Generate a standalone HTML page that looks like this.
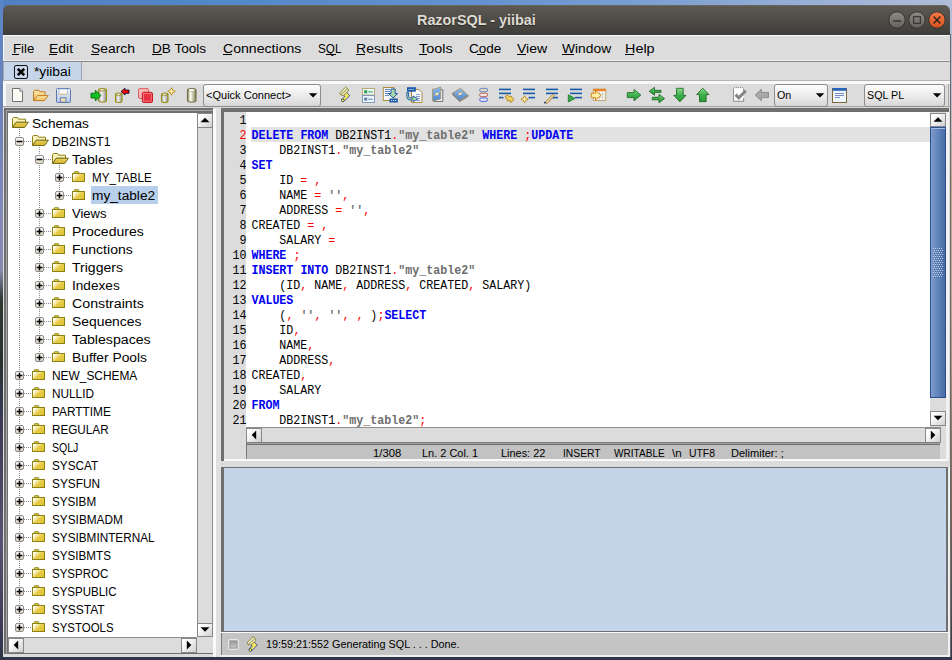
<!DOCTYPE html>
<html><head><meta charset="utf-8"><style>
html,body{margin:0;padding:0;width:952px;height:660px;overflow:hidden;background:#2c3648}
body{position:relative;font-family:"Liberation Sans", sans-serif}
.t{position:absolute;white-space:pre;line-height:1;transform-origin:0 0}
.m{position:absolute;white-space:pre;line-height:1;font-family:"Liberation Mono", monospace;font-size:11.67px;transform:scaleY(1.12);transform-origin:0 9px}
.m b{font-weight:bold}
u{text-decoration:none}
svg{position:absolute;overflow:visible}
</style></head><body>
<div style="position:absolute;left:0;top:0;width:952px;height:660px;background:#2c3648"></div>
<div style="position:absolute;left:0;top:0;width:952px;height:14px;background:linear-gradient(90deg,#4f80c4 0px,#5488c8 240px,#6492d0 480px,#80a2d2 680px,#a8b8d8 900px,#b0bcd8 952px)"></div>
<div style="position:absolute;left:0;top:0;width:3px;height:660px;background:linear-gradient(180deg,#5a86c8 0px,#6a82ba 100px,#8088b8 200px,#8a88b0 270px,#2e3a30 300px,#2a3030 360px,#3a3a58 420px,#5a5274 540px,#4a4262 600px,#2c3446 660px)"></div>
<div style="position:absolute;left:950px;top:0;width:2px;height:660px;background:linear-gradient(180deg,#b0bcd8 0px,#b8c0d4 90px,#c0a890 180px,#c0a898 300px,#8a7060 450px,#5a5050 600px,#2c3648 660px)"></div>
<div style="position:absolute;left:950px;top:34px;width:1px;height:623px;background:#6a6a6a"></div>
<div style="position:absolute;left:3px;top:35px;width:947px;height:622px;background:#dcdcdc"></div>
<div style="position:absolute;left:3px;top:5px;width:947px;height:31px;border-radius:6px 6px 0 0;background:linear-gradient(180deg,#5e5a53,#4d4b46 50%,#3d3c38)"></div>
<div style="position:absolute;left:8px;top:5px;width:937px;height:1px;background:#6b675f"></div>
<div class="t" style="left:417.00px;top:12.96px;font-size:14px;color:#dfdbd2;font-weight:bold;transform:scaleX(1.0267);text-shadow:0 1px 1px #2a2824;">RazorSQL - yiibai</div>
<svg style="position:absolute;left:888px;top:11px" width="18" height="18" viewBox="0 0 18 18"><defs><linearGradient id="gg" x1="0" y1="0" x2="0" y2="1"><stop offset="0" stop-color="#8d8b86"/><stop offset="1" stop-color="#64625d"/></linearGradient><linearGradient id="gc" x1="0" y1="0" x2="0" y2="1"><stop offset="0" stop-color="#f47a48"/><stop offset="1" stop-color="#d9501e"/></linearGradient></defs><circle cx="9" cy="9" r="8.2" fill="url(#gg)" stroke="#34332f" stroke-width="1"/><rect x="5" y="9.2" width="8" height="1.6" fill="#3a3935"/></svg>
<svg style="position:absolute;left:908px;top:11px" width="18" height="18" viewBox="0 0 18 18"><defs><linearGradient id="gg" x1="0" y1="0" x2="0" y2="1"><stop offset="0" stop-color="#8d8b86"/><stop offset="1" stop-color="#64625d"/></linearGradient><linearGradient id="gc" x1="0" y1="0" x2="0" y2="1"><stop offset="0" stop-color="#f47a48"/><stop offset="1" stop-color="#d9501e"/></linearGradient></defs><circle cx="9" cy="9" r="8.2" fill="url(#gg)" stroke="#34332f" stroke-width="1"/><rect x="5.6" y="5.6" width="6.8" height="6.8" fill="none" stroke="#3a3935" stroke-width="1.3"/></svg>
<svg style="position:absolute;left:928px;top:11px" width="18" height="18" viewBox="0 0 18 18"><defs><linearGradient id="gg" x1="0" y1="0" x2="0" y2="1"><stop offset="0" stop-color="#8d8b86"/><stop offset="1" stop-color="#64625d"/></linearGradient><linearGradient id="gc" x1="0" y1="0" x2="0" y2="1"><stop offset="0" stop-color="#f47a48"/><stop offset="1" stop-color="#d9501e"/></linearGradient></defs><circle cx="9" cy="9" r="8.2" fill="url(#gc)" stroke="#34332f" stroke-width="1"/><path d="M5.6 5.6L12.4 12.4M12.4 5.6L5.6 12.4" stroke="#2a2320" stroke-width="1.4"/></svg>
<div style="position:absolute;left:3px;top:35px;width:947px;height:1px;background:#f8f8f8"></div>
<div style="position:absolute;left:3px;top:36px;width:947px;height:24px;background:#dcdcdc"></div>
<div style="position:absolute;left:3px;top:36px;width:1px;height:25px;background:#f8f8f8"></div>
<div style="position:absolute;left:3px;top:60px;width:947px;height:1px;background:#ececec"></div>
<div style="position:absolute;left:3px;top:61px;width:947px;height:1px;background:#8a8a8a"></div>
<div class="t" style="left:12.50px;top:43.22px;font-size:12.5px;color:#000;transform:scaleX(1.0525);">File</div>
<div class="t" style="left:49.40px;top:43.22px;font-size:12.5px;color:#000;transform:scaleX(1.1142);">Edit</div>
<div class="t" style="left:91.00px;top:43.22px;font-size:12.5px;color:#000;transform:scaleX(1.1110);">Search</div>
<div class="t" style="left:151.70px;top:43.22px;font-size:12.5px;color:#000;transform:scaleX(1.0856);">DB Tools</div>
<div class="t" style="left:222.70px;top:43.22px;font-size:12.5px;color:#000;transform:scaleX(1.1282);">Connections</div>
<div class="t" style="left:317.80px;top:43.22px;font-size:12.5px;color:#000;transform:scaleX(0.9355);">SQL</div>
<div class="t" style="left:356.10px;top:43.22px;font-size:12.5px;color:#000;transform:scaleX(1.1300);">Results</div>
<div class="t" style="left:419.30px;top:43.22px;font-size:12.5px;color:#000;transform:scaleX(1.1514);">Tools</div>
<div class="t" style="left:468.70px;top:43.22px;font-size:12.5px;color:#000;transform:scaleX(1.0809);">Code</div>
<div class="t" style="left:516.80px;top:43.22px;font-size:12.5px;color:#000;transform:scaleX(1.1240);">View</div>
<div class="t" style="left:561.80px;top:43.22px;font-size:12.5px;color:#000;transform:scaleX(1.1044);">Window</div>
<div class="t" style="left:625.00px;top:43.22px;font-size:12.5px;color:#000;transform:scaleX(1.1514);">Help</div>
<div style="position:absolute;left:12px;top:54px;width:7px;height:1px;background:#000"></div>
<div style="position:absolute;left:49px;top:54px;width:8px;height:1px;background:#000"></div>
<div style="position:absolute;left:91px;top:54px;width:8px;height:1px;background:#000"></div>
<div style="position:absolute;left:152px;top:54px;width:10px;height:1px;background:#000"></div>
<div style="position:absolute;left:223px;top:54px;width:9px;height:1px;background:#000"></div>
<div style="position:absolute;left:326px;top:54px;width:10px;height:1px;background:#000"></div>
<div style="position:absolute;left:356px;top:54px;width:9px;height:1px;background:#000"></div>
<div style="position:absolute;left:419px;top:54px;width:8px;height:1px;background:#000"></div>
<div style="position:absolute;left:477px;top:54px;width:8px;height:1px;background:#000"></div>
<div style="position:absolute;left:517px;top:54px;width:9px;height:1px;background:#000"></div>
<div style="position:absolute;left:562px;top:54px;width:12px;height:1px;background:#000"></div>
<div style="position:absolute;left:625px;top:54px;width:9px;height:1px;background:#000"></div>
<div style="position:absolute;left:3px;top:62px;width:947px;height:18px;background:#dcdcdc"></div>
<div style="position:absolute;left:3px;top:62px;width:1px;height:18px;background:#a8a8a8"></div>
<div style="position:absolute;left:4px;top:62px;width:77px;height:18px;background:#c6d5ea;border-right:1px solid #9aa4b0"></div>
<div style="position:absolute;left:3px;top:80px;width:947px;height:1px;background:#b4b4b4"></div>
<svg style="position:absolute;left:14px;top:65px" width="14" height="14" viewBox="0 0 14 14"><rect x="0.5" y="0.5" width="13" height="13" rx="1.5" fill="none" stroke="#111" stroke-width="1"/><path d="M3.8 3.8L10.2 10.2M10.2 3.8L3.8 10.2" stroke="#000" stroke-width="2.6"/></svg>
<div class="t" style="left:34.10px;top:65.85px;font-size:12px;color:#000;transform:scaleX(1.1463);">*yiibai</div>
<div style="position:absolute;left:3px;top:81px;width:947px;height:3px;background:#f8f8f8"></div>
<div style="position:absolute;left:3px;top:81px;width:3px;height:27px;background:#f8f8f8"></div>
<div style="position:absolute;left:6px;top:84px;width:942px;height:22px;background:#dcdcdc"></div>
<div style="position:absolute;left:948px;top:84px;width:1px;height:23px;background:#a8a8a8"></div>
<div style="position:absolute;left:3px;top:106px;width:947px;height:1px;background:#a4a4a4"></div>
<div style="position:absolute;left:3px;top:107px;width:947px;height:1px;background:#d8d8d8"></div>
<div style="position:absolute;left:4px;top:108px;width:209px;height:546px;background:#6f6f6f"></div>
<div style="position:absolute;left:6px;top:110px;width:207px;height:1px;background:#a6a6a6"></div>
<div style="position:absolute;left:6px;top:110px;width:1px;height:544px;background:#a6a6a6"></div>
<div style="position:absolute;left:8px;top:113px;width:189px;height:524px;background:#ffffff"></div>
<div style="position:absolute;left:197px;top:113px;width:16px;height:524px;background:#dcdcdc;border-left:1px solid #8e8e8e;box-sizing:border-box"></div>
<div style="position:absolute;left:212px;top:113px;width:1px;height:524px;background:#8e8e8e"></div>
<div style="position:absolute;left:197px;top:113px;width:16px;height:15px;box-sizing:border-box;background:linear-gradient(135deg,#ffffff 20%,#d0d0d0);border:1px solid #888888"></div>
<svg style="left:0;top:0" width="952" height="660"><path d="M200.5 122.2L205.0 117.7L209.5 122.2Z" fill="#000"/></svg>
<div style="position:absolute;left:197px;top:623px;width:16px;height:14px;box-sizing:border-box;background:linear-gradient(135deg,#ffffff 20%,#d0d0d0);border:1px solid #888888"></div>
<svg style="left:0;top:0" width="952" height="660"><path d="M200.5 627.3L205.0 631.8L209.5 627.3Z" fill="#000"/></svg>
<div style="position:absolute;left:8px;top:637px;width:189px;height:16px;background:#dcdcdc;border-top:1px solid #8e8e8e;box-sizing:border-box"></div>
<div style="position:absolute;left:8px;top:638px;width:16px;height:15px;box-sizing:border-box;background:linear-gradient(135deg,#ffffff 20%,#d0d0d0);border:1px solid #888888"></div>
<svg style="left:0;top:0" width="952" height="660"><path d="M18.2 640.5L13.7 645.0L18.2 649.5Z" fill="#000"/></svg>
<div style="position:absolute;left:181px;top:638px;width:16px;height:15px;box-sizing:border-box;background:linear-gradient(135deg,#ffffff 20%,#d0d0d0);border:1px solid #888888"></div>
<svg style="left:0;top:0" width="952" height="660"><path d="M186.8 640.5L191.3 645.0L186.8 649.5Z" fill="#000"/></svg>
<div style="position:absolute;left:197px;top:637px;width:16px;height:16px;background:#dcdcdc"></div>
<div style="position:absolute;left:213px;top:109px;width:3px;height:548px;background:#fafafa"></div>
<div style="position:absolute;left:216px;top:108px;width:5px;height:549px;background:#e0e0e0"></div>
<div style="position:absolute;left:221px;top:108px;width:728px;height:353px;background:#6f6f6f"></div>
<div style="position:absolute;left:224px;top:112px;width:725px;height:349px;background:#dcdcdc"></div>
<div style="position:absolute;left:246px;top:112px;width:684px;height:315px;background:#ffffff"></div>
<div style="position:absolute;left:251px;top:127px;width:679px;height:15px;background:#e2e2e2"></div>
<div style="position:absolute;left:930px;top:112px;width:16px;height:315px;background:#dcdcdc"></div>
<div style="position:absolute;left:930px;top:113px;width:16px;height:14px;box-sizing:border-box;background:linear-gradient(135deg,#ffffff 20%,#d0d0d0);border:1px solid #888888"></div>
<svg style="left:0;top:0" width="952" height="660"><path d="M933.5 121.7L938.0 117.2L942.5 121.7Z" fill="#000"/></svg>
<div style="position:absolute;left:930px;top:127px;width:16px;height:271px;box-sizing:border-box;border:1px solid #2c4f8f;background:linear-gradient(90deg,#7f9ccb,#5b7fb8 60%,#4a6aa4)"></div>
<div style="position:absolute;left:930px;top:411px;width:16px;height:15px;box-sizing:border-box;background:linear-gradient(135deg,#ffffff 20%,#d0d0d0);border:1px solid #888888"></div>
<svg style="left:0;top:0" width="952" height="660"><path d="M933.5 415.8L938.0 420.3L942.5 415.8Z" fill="#000"/></svg>
<svg style="left:0;top:0" width="952" height="660"><rect x="933.0" y="248.0" width="1" height="1" fill="#b8cce8"/><rect x="934.0" y="249.0" width="1" height="1" fill="#3a5a94" opacity="0.6"/><rect x="935.0" y="248.0" width="1" height="1" fill="#b8cce8"/><rect x="936.0" y="249.0" width="1" height="1" fill="#3a5a94" opacity="0.6"/><rect x="937.0" y="248.0" width="1" height="1" fill="#b8cce8"/><rect x="938.0" y="249.0" width="1" height="1" fill="#3a5a94" opacity="0.6"/><rect x="939.0" y="248.0" width="1" height="1" fill="#b8cce8"/><rect x="940.0" y="249.0" width="1" height="1" fill="#3a5a94" opacity="0.6"/><rect x="941.0" y="248.0" width="1" height="1" fill="#b8cce8"/><rect x="942.0" y="249.0" width="1" height="1" fill="#3a5a94" opacity="0.6"/><rect x="934.0" y="250.0" width="1" height="1" fill="#b8cce8"/><rect x="935.0" y="251.0" width="1" height="1" fill="#3a5a94" opacity="0.6"/><rect x="936.0" y="250.0" width="1" height="1" fill="#b8cce8"/><rect x="937.0" y="251.0" width="1" height="1" fill="#3a5a94" opacity="0.6"/><rect x="938.0" y="250.0" width="1" height="1" fill="#b8cce8"/><rect x="939.0" y="251.0" width="1" height="1" fill="#3a5a94" opacity="0.6"/><rect x="940.0" y="250.0" width="1" height="1" fill="#b8cce8"/><rect x="941.0" y="251.0" width="1" height="1" fill="#3a5a94" opacity="0.6"/><rect x="942.0" y="250.0" width="1" height="1" fill="#b8cce8"/><rect x="943.0" y="251.0" width="1" height="1" fill="#3a5a94" opacity="0.6"/><rect x="933.0" y="252.0" width="1" height="1" fill="#b8cce8"/><rect x="934.0" y="253.0" width="1" height="1" fill="#3a5a94" opacity="0.6"/><rect x="935.0" y="252.0" width="1" height="1" fill="#b8cce8"/><rect x="936.0" y="253.0" width="1" height="1" fill="#3a5a94" opacity="0.6"/><rect x="937.0" y="252.0" width="1" height="1" fill="#b8cce8"/><rect x="938.0" y="253.0" width="1" height="1" fill="#3a5a94" opacity="0.6"/><rect x="939.0" y="252.0" width="1" height="1" fill="#b8cce8"/><rect x="940.0" y="253.0" width="1" height="1" fill="#3a5a94" opacity="0.6"/><rect x="941.0" y="252.0" width="1" height="1" fill="#b8cce8"/><rect x="942.0" y="253.0" width="1" height="1" fill="#3a5a94" opacity="0.6"/><rect x="934.0" y="254.0" width="1" height="1" fill="#b8cce8"/><rect x="935.0" y="255.0" width="1" height="1" fill="#3a5a94" opacity="0.6"/><rect x="936.0" y="254.0" width="1" height="1" fill="#b8cce8"/><rect x="937.0" y="255.0" width="1" height="1" fill="#3a5a94" opacity="0.6"/><rect x="938.0" y="254.0" width="1" height="1" fill="#b8cce8"/><rect x="939.0" y="255.0" width="1" height="1" fill="#3a5a94" opacity="0.6"/><rect x="940.0" y="254.0" width="1" height="1" fill="#b8cce8"/><rect x="941.0" y="255.0" width="1" height="1" fill="#3a5a94" opacity="0.6"/><rect x="942.0" y="254.0" width="1" height="1" fill="#b8cce8"/><rect x="943.0" y="255.0" width="1" height="1" fill="#3a5a94" opacity="0.6"/><rect x="933.0" y="256.0" width="1" height="1" fill="#b8cce8"/><rect x="934.0" y="257.0" width="1" height="1" fill="#3a5a94" opacity="0.6"/><rect x="935.0" y="256.0" width="1" height="1" fill="#b8cce8"/><rect x="936.0" y="257.0" width="1" height="1" fill="#3a5a94" opacity="0.6"/><rect x="937.0" y="256.0" width="1" height="1" fill="#b8cce8"/><rect x="938.0" y="257.0" width="1" height="1" fill="#3a5a94" opacity="0.6"/><rect x="939.0" y="256.0" width="1" height="1" fill="#b8cce8"/><rect x="940.0" y="257.0" width="1" height="1" fill="#3a5a94" opacity="0.6"/><rect x="941.0" y="256.0" width="1" height="1" fill="#b8cce8"/><rect x="942.0" y="257.0" width="1" height="1" fill="#3a5a94" opacity="0.6"/><rect x="934.0" y="258.0" width="1" height="1" fill="#b8cce8"/><rect x="935.0" y="259.0" width="1" height="1" fill="#3a5a94" opacity="0.6"/><rect x="936.0" y="258.0" width="1" height="1" fill="#b8cce8"/><rect x="937.0" y="259.0" width="1" height="1" fill="#3a5a94" opacity="0.6"/><rect x="938.0" y="258.0" width="1" height="1" fill="#b8cce8"/><rect x="939.0" y="259.0" width="1" height="1" fill="#3a5a94" opacity="0.6"/><rect x="940.0" y="258.0" width="1" height="1" fill="#b8cce8"/><rect x="941.0" y="259.0" width="1" height="1" fill="#3a5a94" opacity="0.6"/><rect x="942.0" y="258.0" width="1" height="1" fill="#b8cce8"/><rect x="943.0" y="259.0" width="1" height="1" fill="#3a5a94" opacity="0.6"/><rect x="933.0" y="260.0" width="1" height="1" fill="#b8cce8"/><rect x="934.0" y="261.0" width="1" height="1" fill="#3a5a94" opacity="0.6"/><rect x="935.0" y="260.0" width="1" height="1" fill="#b8cce8"/><rect x="936.0" y="261.0" width="1" height="1" fill="#3a5a94" opacity="0.6"/><rect x="937.0" y="260.0" width="1" height="1" fill="#b8cce8"/><rect x="938.0" y="261.0" width="1" height="1" fill="#3a5a94" opacity="0.6"/><rect x="939.0" y="260.0" width="1" height="1" fill="#b8cce8"/><rect x="940.0" y="261.0" width="1" height="1" fill="#3a5a94" opacity="0.6"/><rect x="941.0" y="260.0" width="1" height="1" fill="#b8cce8"/><rect x="942.0" y="261.0" width="1" height="1" fill="#3a5a94" opacity="0.6"/><rect x="934.0" y="262.0" width="1" height="1" fill="#b8cce8"/><rect x="935.0" y="263.0" width="1" height="1" fill="#3a5a94" opacity="0.6"/><rect x="936.0" y="262.0" width="1" height="1" fill="#b8cce8"/><rect x="937.0" y="263.0" width="1" height="1" fill="#3a5a94" opacity="0.6"/><rect x="938.0" y="262.0" width="1" height="1" fill="#b8cce8"/><rect x="939.0" y="263.0" width="1" height="1" fill="#3a5a94" opacity="0.6"/><rect x="940.0" y="262.0" width="1" height="1" fill="#b8cce8"/><rect x="941.0" y="263.0" width="1" height="1" fill="#3a5a94" opacity="0.6"/><rect x="942.0" y="262.0" width="1" height="1" fill="#b8cce8"/><rect x="943.0" y="263.0" width="1" height="1" fill="#3a5a94" opacity="0.6"/><rect x="933.0" y="264.0" width="1" height="1" fill="#b8cce8"/><rect x="934.0" y="265.0" width="1" height="1" fill="#3a5a94" opacity="0.6"/><rect x="935.0" y="264.0" width="1" height="1" fill="#b8cce8"/><rect x="936.0" y="265.0" width="1" height="1" fill="#3a5a94" opacity="0.6"/><rect x="937.0" y="264.0" width="1" height="1" fill="#b8cce8"/><rect x="938.0" y="265.0" width="1" height="1" fill="#3a5a94" opacity="0.6"/><rect x="939.0" y="264.0" width="1" height="1" fill="#b8cce8"/><rect x="940.0" y="265.0" width="1" height="1" fill="#3a5a94" opacity="0.6"/><rect x="941.0" y="264.0" width="1" height="1" fill="#b8cce8"/><rect x="942.0" y="265.0" width="1" height="1" fill="#3a5a94" opacity="0.6"/><rect x="934.0" y="266.0" width="1" height="1" fill="#b8cce8"/><rect x="935.0" y="267.0" width="1" height="1" fill="#3a5a94" opacity="0.6"/><rect x="936.0" y="266.0" width="1" height="1" fill="#b8cce8"/><rect x="937.0" y="267.0" width="1" height="1" fill="#3a5a94" opacity="0.6"/><rect x="938.0" y="266.0" width="1" height="1" fill="#b8cce8"/><rect x="939.0" y="267.0" width="1" height="1" fill="#3a5a94" opacity="0.6"/><rect x="940.0" y="266.0" width="1" height="1" fill="#b8cce8"/><rect x="941.0" y="267.0" width="1" height="1" fill="#3a5a94" opacity="0.6"/><rect x="942.0" y="266.0" width="1" height="1" fill="#b8cce8"/><rect x="943.0" y="267.0" width="1" height="1" fill="#3a5a94" opacity="0.6"/><rect x="933.0" y="268.0" width="1" height="1" fill="#b8cce8"/><rect x="934.0" y="269.0" width="1" height="1" fill="#3a5a94" opacity="0.6"/><rect x="935.0" y="268.0" width="1" height="1" fill="#b8cce8"/><rect x="936.0" y="269.0" width="1" height="1" fill="#3a5a94" opacity="0.6"/><rect x="937.0" y="268.0" width="1" height="1" fill="#b8cce8"/><rect x="938.0" y="269.0" width="1" height="1" fill="#3a5a94" opacity="0.6"/><rect x="939.0" y="268.0" width="1" height="1" fill="#b8cce8"/><rect x="940.0" y="269.0" width="1" height="1" fill="#3a5a94" opacity="0.6"/><rect x="941.0" y="268.0" width="1" height="1" fill="#b8cce8"/><rect x="942.0" y="269.0" width="1" height="1" fill="#3a5a94" opacity="0.6"/><rect x="934.0" y="270.0" width="1" height="1" fill="#b8cce8"/><rect x="935.0" y="271.0" width="1" height="1" fill="#3a5a94" opacity="0.6"/><rect x="936.0" y="270.0" width="1" height="1" fill="#b8cce8"/><rect x="937.0" y="271.0" width="1" height="1" fill="#3a5a94" opacity="0.6"/><rect x="938.0" y="270.0" width="1" height="1" fill="#b8cce8"/><rect x="939.0" y="271.0" width="1" height="1" fill="#3a5a94" opacity="0.6"/><rect x="940.0" y="270.0" width="1" height="1" fill="#b8cce8"/><rect x="941.0" y="271.0" width="1" height="1" fill="#3a5a94" opacity="0.6"/><rect x="942.0" y="270.0" width="1" height="1" fill="#b8cce8"/><rect x="943.0" y="271.0" width="1" height="1" fill="#3a5a94" opacity="0.6"/><rect x="933.0" y="272.0" width="1" height="1" fill="#b8cce8"/><rect x="934.0" y="273.0" width="1" height="1" fill="#3a5a94" opacity="0.6"/><rect x="935.0" y="272.0" width="1" height="1" fill="#b8cce8"/><rect x="936.0" y="273.0" width="1" height="1" fill="#3a5a94" opacity="0.6"/><rect x="937.0" y="272.0" width="1" height="1" fill="#b8cce8"/><rect x="938.0" y="273.0" width="1" height="1" fill="#3a5a94" opacity="0.6"/><rect x="939.0" y="272.0" width="1" height="1" fill="#b8cce8"/><rect x="940.0" y="273.0" width="1" height="1" fill="#3a5a94" opacity="0.6"/><rect x="941.0" y="272.0" width="1" height="1" fill="#b8cce8"/><rect x="942.0" y="273.0" width="1" height="1" fill="#3a5a94" opacity="0.6"/><rect x="934.0" y="274.0" width="1" height="1" fill="#b8cce8"/><rect x="935.0" y="275.0" width="1" height="1" fill="#3a5a94" opacity="0.6"/><rect x="936.0" y="274.0" width="1" height="1" fill="#b8cce8"/><rect x="937.0" y="275.0" width="1" height="1" fill="#3a5a94" opacity="0.6"/><rect x="938.0" y="274.0" width="1" height="1" fill="#b8cce8"/><rect x="939.0" y="275.0" width="1" height="1" fill="#3a5a94" opacity="0.6"/><rect x="940.0" y="274.0" width="1" height="1" fill="#b8cce8"/><rect x="941.0" y="275.0" width="1" height="1" fill="#3a5a94" opacity="0.6"/><rect x="942.0" y="274.0" width="1" height="1" fill="#b8cce8"/><rect x="943.0" y="275.0" width="1" height="1" fill="#3a5a94" opacity="0.6"/><rect x="933.0" y="276.0" width="1" height="1" fill="#b8cce8"/><rect x="934.0" y="277.0" width="1" height="1" fill="#3a5a94" opacity="0.6"/><rect x="935.0" y="276.0" width="1" height="1" fill="#b8cce8"/><rect x="936.0" y="277.0" width="1" height="1" fill="#3a5a94" opacity="0.6"/><rect x="937.0" y="276.0" width="1" height="1" fill="#b8cce8"/><rect x="938.0" y="277.0" width="1" height="1" fill="#3a5a94" opacity="0.6"/><rect x="939.0" y="276.0" width="1" height="1" fill="#b8cce8"/><rect x="940.0" y="277.0" width="1" height="1" fill="#3a5a94" opacity="0.6"/><rect x="941.0" y="276.0" width="1" height="1" fill="#b8cce8"/><rect x="942.0" y="277.0" width="1" height="1" fill="#3a5a94" opacity="0.6"/></svg>
<div style="position:absolute;left:931px;top:128px;width:14px;height:1px;background:#a8c0e4"></div>
<div style="position:absolute;left:946px;top:112px;width:3px;height:349px;background:#f2f2f2"></div>
<div style="position:absolute;left:246px;top:427px;width:695px;height:16px;background:#dcdcdc;border-top:1px solid #8e8e8e;box-sizing:border-box"></div>
<div style="position:absolute;left:246px;top:428px;width:16px;height:15px;box-sizing:border-box;background:linear-gradient(135deg,#ffffff 20%,#d0d0d0);border:1px solid #888888"></div>
<svg style="left:0;top:0" width="952" height="660"><path d="M256.2 430.5L251.7 435.0L256.2 439.5Z" fill="#000"/></svg>
<div style="position:absolute;left:925px;top:428px;width:16px;height:15px;box-sizing:border-box;background:linear-gradient(135deg,#ffffff 20%,#d0d0d0);border:1px solid #888888"></div>
<svg style="left:0;top:0" width="952" height="660"><path d="M930.8 430.5L935.3 435.0L930.8 439.5Z" fill="#000"/></svg>
<div style="position:absolute;left:246px;top:442px;width:694px;height:17px;background:#c2c2c2;border-top:1px solid #808080;border-left:1px solid #777;box-sizing:border-box"></div>
<div style="position:absolute;left:247px;top:443px;width:693px;height:1px;background:#a0a0a0"></div>
<div style="position:absolute;left:247px;top:444px;width:693px;height:1px;background:#6e6e6e"></div>
<div style="position:absolute;left:224px;top:459px;width:722px;height:2px;background:#fafafa"></div>
<div style="position:absolute;left:221px;top:461px;width:729px;height:6px;background:#dcdcdc"></div>
<div style="position:absolute;left:221px;top:467px;width:727px;height:165px;background:#6f6f6f"></div>
<div style="position:absolute;left:224px;top:468px;width:722px;height:162.5px;background:#c4d4e9"></div>
<div style="position:absolute;left:221px;top:632px;width:729px;height:1px;background:#fafafa"></div>
<div style="position:absolute;left:221px;top:633px;width:727px;height:22px;background:#c4c4c4;border-left:1px solid #777;box-sizing:border-box"></div>
<div style="position:absolute;left:221px;top:655px;width:729px;height:2px;background:#f0f0f0"></div>
<div style="position:absolute;left:948px;top:467px;width:2px;height:190px;background:#f0f0f0"></div>
<svg width="0" height="0" style="position:absolute"><defs><linearGradient id="fy" x1="0" y1="0" x2="1" y2="1"><stop offset="0" stop-color="#fffce8"/><stop offset="0.35" stop-color="#f4e08a"/><stop offset="0.5" stop-color="#e8cc48"/><stop offset="1" stop-color="#dcc030"/></linearGradient><linearGradient id="fo" x1="0" y1="0" x2="0" y2="1"><stop offset="0" stop-color="#fff6c8"/><stop offset="1" stop-color="#f4e49a"/></linearGradient><linearGradient id="ff" x1="0" y1="0" x2="0" y2="1"><stop offset="0" stop-color="#ecd060"/><stop offset="1" stop-color="#d8b428"/></linearGradient><linearGradient id="bx" x1="0" y1="0" x2="0" y2="1"><stop offset="0" stop-color="#ffffff"/><stop offset="1" stop-color="#ddd3c2"/></linearGradient></defs></svg>
<div style="position:absolute;left:91px;top:186px;width:67px;height:18px;background:#b8cfeb"></div>
<div style="position:absolute;left:19px;top:129px;width:1px;height:498px;background:repeating-linear-gradient(180deg,#8a8a8a 0 1px,transparent 1px 2px)"></div>
<div style="position:absolute;left:39px;top:147px;width:1px;height:210px;background:repeating-linear-gradient(180deg,#8a8a8a 0 1px,transparent 1px 2px)"></div>
<div style="position:absolute;left:59px;top:165px;width:1px;height:30px;background:repeating-linear-gradient(180deg,#8a8a8a 0 1px,transparent 1px 2px)"></div>
<svg style="left:12px;top:117px" width="17" height="11" viewBox="0 0 17 11"><path d="M0.5 10.5V1.8L1.4 0.5H5.6L6.4 2.2H13.5V5.4H4.3L0.5 10.5Z" fill="url(#fo)" stroke="#8a8212" stroke-width="1"/><path d="M0.6 10.5L4.2 5.2H16.4L12.6 10.5Z" fill="url(#ff)" stroke="#6e6a20" stroke-width="1"/></svg>
<div class="t" style="left:31.80px;top:118.35px;font-size:12px;color:#000;transform:scaleX(1.1375);">Schemas</div>
<div style="position:absolute;left:24px;top:141px;width:8px;height:1px;background:repeating-linear-gradient(90deg,#8a8a8a 0 1px,transparent 1px 2px)"></div>
<svg style="left:15px;top:137px" width="9" height="9" viewBox="0 0 9 9"><rect x="0.5" y="0.5" width="8" height="8" rx="1.5" fill="url(#bx)" stroke="#8c8c8c" stroke-width="1"/><rect x="1.6" y="3.75" width="5.8" height="1.5" fill="#000"/></svg>
<svg style="left:32px;top:135px" width="17" height="11" viewBox="0 0 17 11"><path d="M0.5 10.5V1.8L1.4 0.5H5.6L6.4 2.2H13.5V5.4H4.3L0.5 10.5Z" fill="url(#fo)" stroke="#8a8212" stroke-width="1"/><path d="M0.6 10.5L4.2 5.2H16.4L12.6 10.5Z" fill="url(#ff)" stroke="#6e6a20" stroke-width="1"/></svg>
<div class="t" style="left:51.80px;top:136.35px;font-size:12px;color:#000;transform:scaleX(1.0200);">DB2INST1</div>
<div style="position:absolute;left:44px;top:159px;width:8px;height:1px;background:repeating-linear-gradient(90deg,#8a8a8a 0 1px,transparent 1px 2px)"></div>
<svg style="left:35px;top:155px" width="9" height="9" viewBox="0 0 9 9"><rect x="0.5" y="0.5" width="8" height="8" rx="1.5" fill="url(#bx)" stroke="#8c8c8c" stroke-width="1"/><rect x="1.6" y="3.75" width="5.8" height="1.5" fill="#000"/></svg>
<svg style="left:52px;top:153px" width="17" height="11" viewBox="0 0 17 11"><path d="M0.5 10.5V1.8L1.4 0.5H5.6L6.4 2.2H13.5V5.4H4.3L0.5 10.5Z" fill="url(#fo)" stroke="#8a8212" stroke-width="1"/><path d="M0.6 10.5L4.2 5.2H16.4L12.6 10.5Z" fill="url(#ff)" stroke="#6e6a20" stroke-width="1"/></svg>
<div class="t" style="left:71.80px;top:154.35px;font-size:12px;color:#000;transform:scaleX(1.1762);">Tables</div>
<div style="position:absolute;left:64px;top:177px;width:8px;height:1px;background:repeating-linear-gradient(90deg,#8a8a8a 0 1px,transparent 1px 2px)"></div>
<svg style="left:55px;top:173px" width="9" height="9" viewBox="0 0 9 9"><rect x="0.5" y="0.5" width="8" height="8" rx="1.5" fill="url(#bx)" stroke="#8c8c8c" stroke-width="1"/><rect x="1.6" y="3.75" width="5.8" height="1.5" fill="#000"/><rect x="3.75" y="1.6" width="1.5" height="5.8" fill="#000"/></svg>
<svg style="left:72px;top:171px" width="13" height="11" viewBox="0 0 13 11"><path d="M1.8 2.6L2.6 0.7H6.4L7.2 2.6Z" fill="#e4cc50" stroke="#8a8212" stroke-width="0.9"/><rect x="0.5" y="2.5" width="12" height="8" fill="url(#fy)" stroke="#8a8212" stroke-width="1"/><path d="M1 3H4.5L1 8.5Z" fill="#fffef4" opacity="0.9"/><path d="M5.5 3H7L2 10H1V9.5Z" fill="#f8e8a8" opacity="0.8"/></svg>
<div class="t" style="left:91.80px;top:172.35px;font-size:12px;color:#000;transform:scaleX(0.9660);">MY_TABLE</div>
<div style="position:absolute;left:64px;top:195px;width:8px;height:1px;background:repeating-linear-gradient(90deg,#8a8a8a 0 1px,transparent 1px 2px)"></div>
<svg style="left:55px;top:191px" width="9" height="9" viewBox="0 0 9 9"><rect x="0.5" y="0.5" width="8" height="8" rx="1.5" fill="url(#bx)" stroke="#8c8c8c" stroke-width="1"/><rect x="1.6" y="3.75" width="5.8" height="1.5" fill="#000"/><rect x="3.75" y="1.6" width="1.5" height="5.8" fill="#000"/></svg>
<svg style="left:72px;top:189px" width="13" height="11" viewBox="0 0 13 11"><path d="M1.8 2.6L2.6 0.7H6.4L7.2 2.6Z" fill="#e4cc50" stroke="#8a8212" stroke-width="0.9"/><rect x="0.5" y="2.5" width="12" height="8" fill="url(#fy)" stroke="#8a8212" stroke-width="1"/><path d="M1 3H4.5L1 8.5Z" fill="#fffef4" opacity="0.9"/><path d="M5.5 3H7L2 10H1V9.5Z" fill="#f8e8a8" opacity="0.8"/></svg>
<div class="t" style="left:91.80px;top:190.35px;font-size:12px;color:#000;transform:scaleX(1.1397);">my_table2</div>
<div style="position:absolute;left:44px;top:213px;width:8px;height:1px;background:repeating-linear-gradient(90deg,#8a8a8a 0 1px,transparent 1px 2px)"></div>
<svg style="left:35px;top:209px" width="9" height="9" viewBox="0 0 9 9"><rect x="0.5" y="0.5" width="8" height="8" rx="1.5" fill="url(#bx)" stroke="#8c8c8c" stroke-width="1"/><rect x="1.6" y="3.75" width="5.8" height="1.5" fill="#000"/><rect x="3.75" y="1.6" width="1.5" height="5.8" fill="#000"/></svg>
<svg style="left:52px;top:207px" width="13" height="11" viewBox="0 0 13 11"><path d="M1.8 2.6L2.6 0.7H6.4L7.2 2.6Z" fill="#e4cc50" stroke="#8a8212" stroke-width="0.9"/><rect x="0.5" y="2.5" width="12" height="8" fill="url(#fy)" stroke="#8a8212" stroke-width="1"/><path d="M1 3H4.5L1 8.5Z" fill="#fffef4" opacity="0.9"/><path d="M5.5 3H7L2 10H1V9.5Z" fill="#f8e8a8" opacity="0.8"/></svg>
<div class="t" style="left:71.80px;top:208.35px;font-size:12px;color:#000;transform:scaleX(1.0820);">Views</div>
<div style="position:absolute;left:44px;top:231px;width:8px;height:1px;background:repeating-linear-gradient(90deg,#8a8a8a 0 1px,transparent 1px 2px)"></div>
<svg style="left:35px;top:227px" width="9" height="9" viewBox="0 0 9 9"><rect x="0.5" y="0.5" width="8" height="8" rx="1.5" fill="url(#bx)" stroke="#8c8c8c" stroke-width="1"/><rect x="1.6" y="3.75" width="5.8" height="1.5" fill="#000"/><rect x="3.75" y="1.6" width="1.5" height="5.8" fill="#000"/></svg>
<svg style="left:52px;top:225px" width="13" height="11" viewBox="0 0 13 11"><path d="M1.8 2.6L2.6 0.7H6.4L7.2 2.6Z" fill="#e4cc50" stroke="#8a8212" stroke-width="0.9"/><rect x="0.5" y="2.5" width="12" height="8" fill="url(#fy)" stroke="#8a8212" stroke-width="1"/><path d="M1 3H4.5L1 8.5Z" fill="#fffef4" opacity="0.9"/><path d="M5.5 3H7L2 10H1V9.5Z" fill="#f8e8a8" opacity="0.8"/></svg>
<div class="t" style="left:71.80px;top:226.35px;font-size:12px;color:#000;transform:scaleX(1.1684);">Procedures</div>
<div style="position:absolute;left:44px;top:249px;width:8px;height:1px;background:repeating-linear-gradient(90deg,#8a8a8a 0 1px,transparent 1px 2px)"></div>
<svg style="left:35px;top:245px" width="9" height="9" viewBox="0 0 9 9"><rect x="0.5" y="0.5" width="8" height="8" rx="1.5" fill="url(#bx)" stroke="#8c8c8c" stroke-width="1"/><rect x="1.6" y="3.75" width="5.8" height="1.5" fill="#000"/><rect x="3.75" y="1.6" width="1.5" height="5.8" fill="#000"/></svg>
<svg style="left:52px;top:243px" width="13" height="11" viewBox="0 0 13 11"><path d="M1.8 2.6L2.6 0.7H6.4L7.2 2.6Z" fill="#e4cc50" stroke="#8a8212" stroke-width="0.9"/><rect x="0.5" y="2.5" width="12" height="8" fill="url(#fy)" stroke="#8a8212" stroke-width="1"/><path d="M1 3H4.5L1 8.5Z" fill="#fffef4" opacity="0.9"/><path d="M5.5 3H7L2 10H1V9.5Z" fill="#f8e8a8" opacity="0.8"/></svg>
<div class="t" style="left:71.80px;top:244.35px;font-size:12px;color:#000;transform:scaleX(1.1667);">Functions</div>
<div style="position:absolute;left:44px;top:267px;width:8px;height:1px;background:repeating-linear-gradient(90deg,#8a8a8a 0 1px,transparent 1px 2px)"></div>
<svg style="left:35px;top:263px" width="9" height="9" viewBox="0 0 9 9"><rect x="0.5" y="0.5" width="8" height="8" rx="1.5" fill="url(#bx)" stroke="#8c8c8c" stroke-width="1"/><rect x="1.6" y="3.75" width="5.8" height="1.5" fill="#000"/><rect x="3.75" y="1.6" width="1.5" height="5.8" fill="#000"/></svg>
<svg style="left:52px;top:261px" width="13" height="11" viewBox="0 0 13 11"><path d="M1.8 2.6L2.6 0.7H6.4L7.2 2.6Z" fill="#e4cc50" stroke="#8a8212" stroke-width="0.9"/><rect x="0.5" y="2.5" width="12" height="8" fill="url(#fy)" stroke="#8a8212" stroke-width="1"/><path d="M1 3H4.5L1 8.5Z" fill="#fffef4" opacity="0.9"/><path d="M5.5 3H7L2 10H1V9.5Z" fill="#f8e8a8" opacity="0.8"/></svg>
<div class="t" style="left:71.80px;top:262.35px;font-size:12px;color:#000;transform:scaleX(1.1684);">Triggers</div>
<div style="position:absolute;left:44px;top:285px;width:8px;height:1px;background:repeating-linear-gradient(90deg,#8a8a8a 0 1px,transparent 1px 2px)"></div>
<svg style="left:35px;top:281px" width="9" height="9" viewBox="0 0 9 9"><rect x="0.5" y="0.5" width="8" height="8" rx="1.5" fill="url(#bx)" stroke="#8c8c8c" stroke-width="1"/><rect x="1.6" y="3.75" width="5.8" height="1.5" fill="#000"/><rect x="3.75" y="1.6" width="1.5" height="5.8" fill="#000"/></svg>
<svg style="left:52px;top:279px" width="13" height="11" viewBox="0 0 13 11"><path d="M1.8 2.6L2.6 0.7H6.4L7.2 2.6Z" fill="#e4cc50" stroke="#8a8212" stroke-width="0.9"/><rect x="0.5" y="2.5" width="12" height="8" fill="url(#fy)" stroke="#8a8212" stroke-width="1"/><path d="M1 3H4.5L1 8.5Z" fill="#fffef4" opacity="0.9"/><path d="M5.5 3H7L2 10H1V9.5Z" fill="#f8e8a8" opacity="0.8"/></svg>
<div class="t" style="left:71.80px;top:280.35px;font-size:12px;color:#000;transform:scaleX(1.1349);">Indexes</div>
<div style="position:absolute;left:44px;top:303px;width:8px;height:1px;background:repeating-linear-gradient(90deg,#8a8a8a 0 1px,transparent 1px 2px)"></div>
<svg style="left:35px;top:299px" width="9" height="9" viewBox="0 0 9 9"><rect x="0.5" y="0.5" width="8" height="8" rx="1.5" fill="url(#bx)" stroke="#8c8c8c" stroke-width="1"/><rect x="1.6" y="3.75" width="5.8" height="1.5" fill="#000"/><rect x="3.75" y="1.6" width="1.5" height="5.8" fill="#000"/></svg>
<svg style="left:52px;top:297px" width="13" height="11" viewBox="0 0 13 11"><path d="M1.8 2.6L2.6 0.7H6.4L7.2 2.6Z" fill="#e4cc50" stroke="#8a8212" stroke-width="0.9"/><rect x="0.5" y="2.5" width="12" height="8" fill="url(#fy)" stroke="#8a8212" stroke-width="1"/><path d="M1 3H4.5L1 8.5Z" fill="#fffef4" opacity="0.9"/><path d="M5.5 3H7L2 10H1V9.5Z" fill="#f8e8a8" opacity="0.8"/></svg>
<div class="t" style="left:71.80px;top:298.35px;font-size:12px;color:#000;transform:scaleX(1.1830);">Constraints</div>
<div style="position:absolute;left:44px;top:321px;width:8px;height:1px;background:repeating-linear-gradient(90deg,#8a8a8a 0 1px,transparent 1px 2px)"></div>
<svg style="left:35px;top:317px" width="9" height="9" viewBox="0 0 9 9"><rect x="0.5" y="0.5" width="8" height="8" rx="1.5" fill="url(#bx)" stroke="#8c8c8c" stroke-width="1"/><rect x="1.6" y="3.75" width="5.8" height="1.5" fill="#000"/><rect x="3.75" y="1.6" width="1.5" height="5.8" fill="#000"/></svg>
<svg style="left:52px;top:315px" width="13" height="11" viewBox="0 0 13 11"><path d="M1.8 2.6L2.6 0.7H6.4L7.2 2.6Z" fill="#e4cc50" stroke="#8a8212" stroke-width="0.9"/><rect x="0.5" y="2.5" width="12" height="8" fill="url(#fy)" stroke="#8a8212" stroke-width="1"/><path d="M1 3H4.5L1 8.5Z" fill="#fffef4" opacity="0.9"/><path d="M5.5 3H7L2 10H1V9.5Z" fill="#f8e8a8" opacity="0.8"/></svg>
<div class="t" style="left:71.80px;top:316.35px;font-size:12px;color:#000;transform:scaleX(1.1558);">Sequences</div>
<div style="position:absolute;left:44px;top:339px;width:8px;height:1px;background:repeating-linear-gradient(90deg,#8a8a8a 0 1px,transparent 1px 2px)"></div>
<svg style="left:35px;top:335px" width="9" height="9" viewBox="0 0 9 9"><rect x="0.5" y="0.5" width="8" height="8" rx="1.5" fill="url(#bx)" stroke="#8c8c8c" stroke-width="1"/><rect x="1.6" y="3.75" width="5.8" height="1.5" fill="#000"/><rect x="3.75" y="1.6" width="1.5" height="5.8" fill="#000"/></svg>
<svg style="left:52px;top:333px" width="13" height="11" viewBox="0 0 13 11"><path d="M1.8 2.6L2.6 0.7H6.4L7.2 2.6Z" fill="#e4cc50" stroke="#8a8212" stroke-width="0.9"/><rect x="0.5" y="2.5" width="12" height="8" fill="url(#fy)" stroke="#8a8212" stroke-width="1"/><path d="M1 3H4.5L1 8.5Z" fill="#fffef4" opacity="0.9"/><path d="M5.5 3H7L2 10H1V9.5Z" fill="#f8e8a8" opacity="0.8"/></svg>
<div class="t" style="left:71.80px;top:334.35px;font-size:12px;color:#000;transform:scaleX(1.1798);">Tablespaces</div>
<div style="position:absolute;left:44px;top:357px;width:8px;height:1px;background:repeating-linear-gradient(90deg,#8a8a8a 0 1px,transparent 1px 2px)"></div>
<svg style="left:35px;top:353px" width="9" height="9" viewBox="0 0 9 9"><rect x="0.5" y="0.5" width="8" height="8" rx="1.5" fill="url(#bx)" stroke="#8c8c8c" stroke-width="1"/><rect x="1.6" y="3.75" width="5.8" height="1.5" fill="#000"/><rect x="3.75" y="1.6" width="1.5" height="5.8" fill="#000"/></svg>
<svg style="left:52px;top:351px" width="13" height="11" viewBox="0 0 13 11"><path d="M1.8 2.6L2.6 0.7H6.4L7.2 2.6Z" fill="#e4cc50" stroke="#8a8212" stroke-width="0.9"/><rect x="0.5" y="2.5" width="12" height="8" fill="url(#fy)" stroke="#8a8212" stroke-width="1"/><path d="M1 3H4.5L1 8.5Z" fill="#fffef4" opacity="0.9"/><path d="M5.5 3H7L2 10H1V9.5Z" fill="#f8e8a8" opacity="0.8"/></svg>
<div class="t" style="left:71.80px;top:352.35px;font-size:12px;color:#000;transform:scaleX(1.1512);">Buffer Pools</div>
<div style="position:absolute;left:24px;top:375px;width:8px;height:1px;background:repeating-linear-gradient(90deg,#8a8a8a 0 1px,transparent 1px 2px)"></div>
<svg style="left:15px;top:371px" width="9" height="9" viewBox="0 0 9 9"><rect x="0.5" y="0.5" width="8" height="8" rx="1.5" fill="url(#bx)" stroke="#8c8c8c" stroke-width="1"/><rect x="1.6" y="3.75" width="5.8" height="1.5" fill="#000"/><rect x="3.75" y="1.6" width="1.5" height="5.8" fill="#000"/></svg>
<svg style="left:32px;top:369px" width="13" height="11" viewBox="0 0 13 11"><path d="M1.8 2.6L2.6 0.7H6.4L7.2 2.6Z" fill="#e4cc50" stroke="#8a8212" stroke-width="0.9"/><rect x="0.5" y="2.5" width="12" height="8" fill="url(#fy)" stroke="#8a8212" stroke-width="1"/><path d="M1 3H4.5L1 8.5Z" fill="#fffef4" opacity="0.9"/><path d="M5.5 3H7L2 10H1V9.5Z" fill="#f8e8a8" opacity="0.8"/></svg>
<div class="t" style="left:51.80px;top:370.35px;font-size:12px;color:#000;transform:scaleX(0.9917);">NEW_SCHEMA</div>
<div style="position:absolute;left:24px;top:393px;width:8px;height:1px;background:repeating-linear-gradient(90deg,#8a8a8a 0 1px,transparent 1px 2px)"></div>
<svg style="left:15px;top:389px" width="9" height="9" viewBox="0 0 9 9"><rect x="0.5" y="0.5" width="8" height="8" rx="1.5" fill="url(#bx)" stroke="#8c8c8c" stroke-width="1"/><rect x="1.6" y="3.75" width="5.8" height="1.5" fill="#000"/><rect x="3.75" y="1.6" width="1.5" height="5.8" fill="#000"/></svg>
<svg style="left:32px;top:387px" width="13" height="11" viewBox="0 0 13 11"><path d="M1.8 2.6L2.6 0.7H6.4L7.2 2.6Z" fill="#e4cc50" stroke="#8a8212" stroke-width="0.9"/><rect x="0.5" y="2.5" width="12" height="8" fill="url(#fy)" stroke="#8a8212" stroke-width="1"/><path d="M1 3H4.5L1 8.5Z" fill="#fffef4" opacity="0.9"/><path d="M5.5 3H7L2 10H1V9.5Z" fill="#f8e8a8" opacity="0.8"/></svg>
<div class="t" style="left:51.80px;top:388.35px;font-size:12px;color:#000;transform:scaleX(0.9841);">NULLID</div>
<div style="position:absolute;left:24px;top:411px;width:8px;height:1px;background:repeating-linear-gradient(90deg,#8a8a8a 0 1px,transparent 1px 2px)"></div>
<svg style="left:15px;top:407px" width="9" height="9" viewBox="0 0 9 9"><rect x="0.5" y="0.5" width="8" height="8" rx="1.5" fill="url(#bx)" stroke="#8c8c8c" stroke-width="1"/><rect x="1.6" y="3.75" width="5.8" height="1.5" fill="#000"/><rect x="3.75" y="1.6" width="1.5" height="5.8" fill="#000"/></svg>
<svg style="left:32px;top:405px" width="13" height="11" viewBox="0 0 13 11"><path d="M1.8 2.6L2.6 0.7H6.4L7.2 2.6Z" fill="#e4cc50" stroke="#8a8212" stroke-width="0.9"/><rect x="0.5" y="2.5" width="12" height="8" fill="url(#fy)" stroke="#8a8212" stroke-width="1"/><path d="M1 3H4.5L1 8.5Z" fill="#fffef4" opacity="0.9"/><path d="M5.5 3H7L2 10H1V9.5Z" fill="#f8e8a8" opacity="0.8"/></svg>
<div class="t" style="left:51.80px;top:406.35px;font-size:12px;color:#000;transform:scaleX(0.9889);">PARTTIME</div>
<div style="position:absolute;left:24px;top:429px;width:8px;height:1px;background:repeating-linear-gradient(90deg,#8a8a8a 0 1px,transparent 1px 2px)"></div>
<svg style="left:15px;top:425px" width="9" height="9" viewBox="0 0 9 9"><rect x="0.5" y="0.5" width="8" height="8" rx="1.5" fill="url(#bx)" stroke="#8c8c8c" stroke-width="1"/><rect x="1.6" y="3.75" width="5.8" height="1.5" fill="#000"/><rect x="3.75" y="1.6" width="1.5" height="5.8" fill="#000"/></svg>
<svg style="left:32px;top:423px" width="13" height="11" viewBox="0 0 13 11"><path d="M1.8 2.6L2.6 0.7H6.4L7.2 2.6Z" fill="#e4cc50" stroke="#8a8212" stroke-width="0.9"/><rect x="0.5" y="2.5" width="12" height="8" fill="url(#fy)" stroke="#8a8212" stroke-width="1"/><path d="M1 3H4.5L1 8.5Z" fill="#fffef4" opacity="0.9"/><path d="M5.5 3H7L2 10H1V9.5Z" fill="#f8e8a8" opacity="0.8"/></svg>
<div class="t" style="left:51.80px;top:424.35px;font-size:12px;color:#000;transform:scaleX(0.9756);">REGULAR</div>
<div style="position:absolute;left:24px;top:447px;width:8px;height:1px;background:repeating-linear-gradient(90deg,#8a8a8a 0 1px,transparent 1px 2px)"></div>
<svg style="left:15px;top:443px" width="9" height="9" viewBox="0 0 9 9"><rect x="0.5" y="0.5" width="8" height="8" rx="1.5" fill="url(#bx)" stroke="#8c8c8c" stroke-width="1"/><rect x="1.6" y="3.75" width="5.8" height="1.5" fill="#000"/><rect x="3.75" y="1.6" width="1.5" height="5.8" fill="#000"/></svg>
<svg style="left:32px;top:441px" width="13" height="11" viewBox="0 0 13 11"><path d="M1.8 2.6L2.6 0.7H6.4L7.2 2.6Z" fill="#e4cc50" stroke="#8a8212" stroke-width="0.9"/><rect x="0.5" y="2.5" width="12" height="8" fill="url(#fy)" stroke="#8a8212" stroke-width="1"/><path d="M1 3H4.5L1 8.5Z" fill="#fffef4" opacity="0.9"/><path d="M5.5 3H7L2 10H1V9.5Z" fill="#f8e8a8" opacity="0.8"/></svg>
<div class="t" style="left:51.80px;top:442.35px;font-size:12px;color:#000;transform:scaleX(0.8797);">SQLJ</div>
<div style="position:absolute;left:24px;top:465px;width:8px;height:1px;background:repeating-linear-gradient(90deg,#8a8a8a 0 1px,transparent 1px 2px)"></div>
<svg style="left:15px;top:461px" width="9" height="9" viewBox="0 0 9 9"><rect x="0.5" y="0.5" width="8" height="8" rx="1.5" fill="url(#bx)" stroke="#8c8c8c" stroke-width="1"/><rect x="1.6" y="3.75" width="5.8" height="1.5" fill="#000"/><rect x="3.75" y="1.6" width="1.5" height="5.8" fill="#000"/></svg>
<svg style="left:32px;top:459px" width="13" height="11" viewBox="0 0 13 11"><path d="M1.8 2.6L2.6 0.7H6.4L7.2 2.6Z" fill="#e4cc50" stroke="#8a8212" stroke-width="0.9"/><rect x="0.5" y="2.5" width="12" height="8" fill="url(#fy)" stroke="#8a8212" stroke-width="1"/><path d="M1 3H4.5L1 8.5Z" fill="#fffef4" opacity="0.9"/><path d="M5.5 3H7L2 10H1V9.5Z" fill="#f8e8a8" opacity="0.8"/></svg>
<div class="t" style="left:51.80px;top:460.35px;font-size:12px;color:#000;transform:scaleX(0.9805);">SYSCAT</div>
<div style="position:absolute;left:24px;top:483px;width:8px;height:1px;background:repeating-linear-gradient(90deg,#8a8a8a 0 1px,transparent 1px 2px)"></div>
<svg style="left:15px;top:479px" width="9" height="9" viewBox="0 0 9 9"><rect x="0.5" y="0.5" width="8" height="8" rx="1.5" fill="url(#bx)" stroke="#8c8c8c" stroke-width="1"/><rect x="1.6" y="3.75" width="5.8" height="1.5" fill="#000"/><rect x="3.75" y="1.6" width="1.5" height="5.8" fill="#000"/></svg>
<svg style="left:32px;top:477px" width="13" height="11" viewBox="0 0 13 11"><path d="M1.8 2.6L2.6 0.7H6.4L7.2 2.6Z" fill="#e4cc50" stroke="#8a8212" stroke-width="0.9"/><rect x="0.5" y="2.5" width="12" height="8" fill="url(#fy)" stroke="#8a8212" stroke-width="1"/><path d="M1 3H4.5L1 8.5Z" fill="#fffef4" opacity="0.9"/><path d="M5.5 3H7L2 10H1V9.5Z" fill="#f8e8a8" opacity="0.8"/></svg>
<div class="t" style="left:51.80px;top:478.35px;font-size:12px;color:#000;transform:scaleX(0.9862);">SYSFUN</div>
<div style="position:absolute;left:24px;top:501px;width:8px;height:1px;background:repeating-linear-gradient(90deg,#8a8a8a 0 1px,transparent 1px 2px)"></div>
<svg style="left:15px;top:497px" width="9" height="9" viewBox="0 0 9 9"><rect x="0.5" y="0.5" width="8" height="8" rx="1.5" fill="url(#bx)" stroke="#8c8c8c" stroke-width="1"/><rect x="1.6" y="3.75" width="5.8" height="1.5" fill="#000"/><rect x="3.75" y="1.6" width="1.5" height="5.8" fill="#000"/></svg>
<svg style="left:32px;top:495px" width="13" height="11" viewBox="0 0 13 11"><path d="M1.8 2.6L2.6 0.7H6.4L7.2 2.6Z" fill="#e4cc50" stroke="#8a8212" stroke-width="0.9"/><rect x="0.5" y="2.5" width="12" height="8" fill="url(#fy)" stroke="#8a8212" stroke-width="1"/><path d="M1 3H4.5L1 8.5Z" fill="#fffef4" opacity="0.9"/><path d="M5.5 3H7L2 10H1V9.5Z" fill="#f8e8a8" opacity="0.8"/></svg>
<div class="t" style="left:51.80px;top:496.35px;font-size:12px;color:#000;transform:scaleX(0.9725);">SYSIBM</div>
<div style="position:absolute;left:24px;top:519px;width:8px;height:1px;background:repeating-linear-gradient(90deg,#8a8a8a 0 1px,transparent 1px 2px)"></div>
<svg style="left:15px;top:515px" width="9" height="9" viewBox="0 0 9 9"><rect x="0.5" y="0.5" width="8" height="8" rx="1.5" fill="url(#bx)" stroke="#8c8c8c" stroke-width="1"/><rect x="1.6" y="3.75" width="5.8" height="1.5" fill="#000"/><rect x="3.75" y="1.6" width="1.5" height="5.8" fill="#000"/></svg>
<svg style="left:32px;top:513px" width="13" height="11" viewBox="0 0 13 11"><path d="M1.8 2.6L2.6 0.7H6.4L7.2 2.6Z" fill="#e4cc50" stroke="#8a8212" stroke-width="0.9"/><rect x="0.5" y="2.5" width="12" height="8" fill="url(#fy)" stroke="#8a8212" stroke-width="1"/><path d="M1 3H4.5L1 8.5Z" fill="#fffef4" opacity="0.9"/><path d="M5.5 3H7L2 10H1V9.5Z" fill="#f8e8a8" opacity="0.8"/></svg>
<div class="t" style="left:51.80px;top:514.35px;font-size:12px;color:#000;transform:scaleX(0.9832);">SYSIBMADM</div>
<div style="position:absolute;left:24px;top:537px;width:8px;height:1px;background:repeating-linear-gradient(90deg,#8a8a8a 0 1px,transparent 1px 2px)"></div>
<svg style="left:15px;top:533px" width="9" height="9" viewBox="0 0 9 9"><rect x="0.5" y="0.5" width="8" height="8" rx="1.5" fill="url(#bx)" stroke="#8c8c8c" stroke-width="1"/><rect x="1.6" y="3.75" width="5.8" height="1.5" fill="#000"/><rect x="3.75" y="1.6" width="1.5" height="5.8" fill="#000"/></svg>
<svg style="left:32px;top:531px" width="13" height="11" viewBox="0 0 13 11"><path d="M1.8 2.6L2.6 0.7H6.4L7.2 2.6Z" fill="#e4cc50" stroke="#8a8212" stroke-width="0.9"/><rect x="0.5" y="2.5" width="12" height="8" fill="url(#fy)" stroke="#8a8212" stroke-width="1"/><path d="M1 3H4.5L1 8.5Z" fill="#fffef4" opacity="0.9"/><path d="M5.5 3H7L2 10H1V9.5Z" fill="#f8e8a8" opacity="0.8"/></svg>
<div class="t" style="left:51.80px;top:532.35px;font-size:12px;color:#000;transform:scaleX(0.9791);">SYSIBMINTERNAL</div>
<div style="position:absolute;left:24px;top:555px;width:8px;height:1px;background:repeating-linear-gradient(90deg,#8a8a8a 0 1px,transparent 1px 2px)"></div>
<svg style="left:15px;top:551px" width="9" height="9" viewBox="0 0 9 9"><rect x="0.5" y="0.5" width="8" height="8" rx="1.5" fill="url(#bx)" stroke="#8c8c8c" stroke-width="1"/><rect x="1.6" y="3.75" width="5.8" height="1.5" fill="#000"/><rect x="3.75" y="1.6" width="1.5" height="5.8" fill="#000"/></svg>
<svg style="left:32px;top:549px" width="13" height="11" viewBox="0 0 13 11"><path d="M1.8 2.6L2.6 0.7H6.4L7.2 2.6Z" fill="#e4cc50" stroke="#8a8212" stroke-width="0.9"/><rect x="0.5" y="2.5" width="12" height="8" fill="url(#fy)" stroke="#8a8212" stroke-width="1"/><path d="M1 3H4.5L1 8.5Z" fill="#fffef4" opacity="0.9"/><path d="M5.5 3H7L2 10H1V9.5Z" fill="#f8e8a8" opacity="0.8"/></svg>
<div class="t" style="left:51.80px;top:550.35px;font-size:12px;color:#000;transform:scaleX(0.9707);">SYSIBMTS</div>
<div style="position:absolute;left:24px;top:573px;width:8px;height:1px;background:repeating-linear-gradient(90deg,#8a8a8a 0 1px,transparent 1px 2px)"></div>
<svg style="left:15px;top:569px" width="9" height="9" viewBox="0 0 9 9"><rect x="0.5" y="0.5" width="8" height="8" rx="1.5" fill="url(#bx)" stroke="#8c8c8c" stroke-width="1"/><rect x="1.6" y="3.75" width="5.8" height="1.5" fill="#000"/><rect x="3.75" y="1.6" width="1.5" height="5.8" fill="#000"/></svg>
<svg style="left:32px;top:567px" width="13" height="11" viewBox="0 0 13 11"><path d="M1.8 2.6L2.6 0.7H6.4L7.2 2.6Z" fill="#e4cc50" stroke="#8a8212" stroke-width="0.9"/><rect x="0.5" y="2.5" width="12" height="8" fill="url(#fy)" stroke="#8a8212" stroke-width="1"/><path d="M1 3H4.5L1 8.5Z" fill="#fffef4" opacity="0.9"/><path d="M5.5 3H7L2 10H1V9.5Z" fill="#f8e8a8" opacity="0.8"/></svg>
<div class="t" style="left:51.80px;top:568.35px;font-size:12px;color:#000;transform:scaleX(0.9577);">SYSPROC</div>
<div style="position:absolute;left:24px;top:591px;width:8px;height:1px;background:repeating-linear-gradient(90deg,#8a8a8a 0 1px,transparent 1px 2px)"></div>
<svg style="left:15px;top:587px" width="9" height="9" viewBox="0 0 9 9"><rect x="0.5" y="0.5" width="8" height="8" rx="1.5" fill="url(#bx)" stroke="#8c8c8c" stroke-width="1"/><rect x="1.6" y="3.75" width="5.8" height="1.5" fill="#000"/><rect x="3.75" y="1.6" width="1.5" height="5.8" fill="#000"/></svg>
<svg style="left:32px;top:585px" width="13" height="11" viewBox="0 0 13 11"><path d="M1.8 2.6L2.6 0.7H6.4L7.2 2.6Z" fill="#e4cc50" stroke="#8a8212" stroke-width="0.9"/><rect x="0.5" y="2.5" width="12" height="8" fill="url(#fy)" stroke="#8a8212" stroke-width="1"/><path d="M1 3H4.5L1 8.5Z" fill="#fffef4" opacity="0.9"/><path d="M5.5 3H7L2 10H1V9.5Z" fill="#f8e8a8" opacity="0.8"/></svg>
<div class="t" style="left:51.80px;top:586.35px;font-size:12px;color:#000;transform:scaleX(0.9590);">SYSPUBLIC</div>
<div style="position:absolute;left:24px;top:609px;width:8px;height:1px;background:repeating-linear-gradient(90deg,#8a8a8a 0 1px,transparent 1px 2px)"></div>
<svg style="left:15px;top:605px" width="9" height="9" viewBox="0 0 9 9"><rect x="0.5" y="0.5" width="8" height="8" rx="1.5" fill="url(#bx)" stroke="#8c8c8c" stroke-width="1"/><rect x="1.6" y="3.75" width="5.8" height="1.5" fill="#000"/><rect x="3.75" y="1.6" width="1.5" height="5.8" fill="#000"/></svg>
<svg style="left:32px;top:603px" width="13" height="11" viewBox="0 0 13 11"><path d="M1.8 2.6L2.6 0.7H6.4L7.2 2.6Z" fill="#e4cc50" stroke="#8a8212" stroke-width="0.9"/><rect x="0.5" y="2.5" width="12" height="8" fill="url(#fy)" stroke="#8a8212" stroke-width="1"/><path d="M1 3H4.5L1 8.5Z" fill="#fffef4" opacity="0.9"/><path d="M5.5 3H7L2 10H1V9.5Z" fill="#f8e8a8" opacity="0.8"/></svg>
<div class="t" style="left:51.80px;top:604.35px;font-size:12px;color:#000;">SYSSTAT</div>
<div style="position:absolute;left:24px;top:627px;width:8px;height:1px;background:repeating-linear-gradient(90deg,#8a8a8a 0 1px,transparent 1px 2px)"></div>
<svg style="left:15px;top:623px" width="9" height="9" viewBox="0 0 9 9"><rect x="0.5" y="0.5" width="8" height="8" rx="1.5" fill="url(#bx)" stroke="#8c8c8c" stroke-width="1"/><rect x="1.6" y="3.75" width="5.8" height="1.5" fill="#000"/><rect x="3.75" y="1.6" width="1.5" height="5.8" fill="#000"/></svg>
<svg style="left:32px;top:621px" width="13" height="11" viewBox="0 0 13 11"><path d="M1.8 2.6L2.6 0.7H6.4L7.2 2.6Z" fill="#e4cc50" stroke="#8a8212" stroke-width="0.9"/><rect x="0.5" y="2.5" width="12" height="8" fill="url(#fy)" stroke="#8a8212" stroke-width="1"/><path d="M1 3H4.5L1 8.5Z" fill="#fffef4" opacity="0.9"/><path d="M5.5 3H7L2 10H1V9.5Z" fill="#f8e8a8" opacity="0.8"/></svg>
<div class="t" style="left:51.80px;top:622.35px;font-size:12px;color:#000;transform:scaleX(0.9555);">SYSTOOLS</div>
<div class="m" style="left:239.40px;top:116.05px;color:#000;transform:scaleY(1.04)">1</div>
<div class="m" style="left:239.40px;top:131.05px;color:#ff0000;transform:scaleY(1.04)">2</div>
<div class="m" style="left:251.4px;top:131.05px;color:#000"><b style="color:#0000f0">DELETE</b> <b style="color:#0000f0">FROM</b> DB2INST1<span style="color:#ff0000">.</span><b style="color:#6e6e6e">"my_table2"</b> <b style="color:#0000f0">WHERE</b> <span style="color:#ff0000">;</span><b style="color:#0000f0">UPDATE</b></div>
<div class="m" style="left:239.40px;top:146.05px;color:#000;transform:scaleY(1.04)">3</div>
<div class="m" style="left:251.4px;top:146.05px;color:#000">    DB2INST1<span style="color:#ff0000">.</span><b style="color:#6e6e6e">"my_table2"</b></div>
<div class="m" style="left:239.40px;top:161.05px;color:#000;transform:scaleY(1.04)">4</div>
<div class="m" style="left:251.4px;top:161.05px;color:#000"><b style="color:#0000f0">SET</b></div>
<div class="m" style="left:239.40px;top:176.05px;color:#000;transform:scaleY(1.04)">5</div>
<div class="m" style="left:251.4px;top:176.05px;color:#000">    ID <span style="color:#ff0000">=</span> <span style="color:#ff0000">,</span></div>
<div class="m" style="left:239.40px;top:191.05px;color:#000;transform:scaleY(1.04)">6</div>
<div class="m" style="left:251.4px;top:191.05px;color:#000">    NAME <span style="color:#ff0000">=</span> <b style="color:#6e6e6e">''</b><span style="color:#ff0000">,</span></div>
<div class="m" style="left:239.40px;top:206.05px;color:#000;transform:scaleY(1.04)">7</div>
<div class="m" style="left:251.4px;top:206.05px;color:#000">    ADDRESS <span style="color:#ff0000">=</span> <b style="color:#6e6e6e">''</b><span style="color:#ff0000">,</span></div>
<div class="m" style="left:239.40px;top:221.05px;color:#000;transform:scaleY(1.04)">8</div>
<div class="m" style="left:251.4px;top:221.05px;color:#000">CREATED <span style="color:#ff0000">=</span> <span style="color:#ff0000">,</span></div>
<div class="m" style="left:239.40px;top:236.05px;color:#000;transform:scaleY(1.04)">9</div>
<div class="m" style="left:251.4px;top:236.05px;color:#000">    SALARY <span style="color:#ff0000">=</span></div>
<div class="m" style="left:232.40px;top:251.05px;color:#000;transform:scaleY(1.04)">10</div>
<div class="m" style="left:251.4px;top:251.05px;color:#000"><b style="color:#0000f0">WHERE</b> <span style="color:#ff0000">;</span></div>
<div class="m" style="left:232.40px;top:266.05px;color:#000;transform:scaleY(1.04)">11</div>
<div class="m" style="left:251.4px;top:266.05px;color:#000"><b style="color:#0000f0">INSERT</b> <b style="color:#0000f0">INTO</b> DB2INST1<span style="color:#ff0000">.</span><b style="color:#6e6e6e">"my_table2"</b></div>
<div class="m" style="left:232.40px;top:281.05px;color:#000;transform:scaleY(1.04)">12</div>
<div class="m" style="left:251.4px;top:281.05px;color:#000">    (ID<span style="color:#ff0000">,</span> NAME<span style="color:#ff0000">,</span> ADDRESS<span style="color:#ff0000">,</span> CREATED<span style="color:#ff0000">,</span> SALARY)</div>
<div class="m" style="left:232.40px;top:296.05px;color:#000;transform:scaleY(1.04)">13</div>
<div class="m" style="left:251.4px;top:296.05px;color:#000"><b style="color:#0000f0">VALUES</b></div>
<div class="m" style="left:232.40px;top:311.05px;color:#000;transform:scaleY(1.04)">14</div>
<div class="m" style="left:251.4px;top:311.05px;color:#000">    (<span style="color:#ff0000">,</span> <b style="color:#6e6e6e">''</b><span style="color:#ff0000">,</span> <b style="color:#6e6e6e">''</b><span style="color:#ff0000">,</span> <span style="color:#ff0000">,</span> )<span style="color:#ff0000">;</span><b style="color:#0000f0">SELECT</b></div>
<div class="m" style="left:232.40px;top:326.05px;color:#000;transform:scaleY(1.04)">15</div>
<div class="m" style="left:251.4px;top:326.05px;color:#000">    ID<span style="color:#ff0000">,</span></div>
<div class="m" style="left:232.40px;top:341.05px;color:#000;transform:scaleY(1.04)">16</div>
<div class="m" style="left:251.4px;top:341.05px;color:#000">    NAME<span style="color:#ff0000">,</span></div>
<div class="m" style="left:232.40px;top:356.05px;color:#000;transform:scaleY(1.04)">17</div>
<div class="m" style="left:251.4px;top:356.05px;color:#000">    ADDRESS<span style="color:#ff0000">,</span></div>
<div class="m" style="left:232.40px;top:371.05px;color:#000;transform:scaleY(1.04)">18</div>
<div class="m" style="left:251.4px;top:371.05px;color:#000">CREATED<span style="color:#ff0000">,</span></div>
<div class="m" style="left:232.40px;top:386.05px;color:#000;transform:scaleY(1.04)">19</div>
<div class="m" style="left:251.4px;top:386.05px;color:#000">    SALARY</div>
<div class="m" style="left:232.40px;top:401.05px;color:#000;transform:scaleY(1.04)">20</div>
<div class="m" style="left:251.4px;top:401.05px;color:#000"><b style="color:#0000f0">FROM</b></div>
<div class="m" style="left:232.40px;top:416.05px;color:#000;transform:scaleY(1.04)">21</div>
<div class="m" style="left:251.4px;top:416.05px;color:#000">    DB2INST1<span style="color:#ff0000">.</span><b style="color:#6e6e6e">"my_table2"</b><span style="color:#ff0000">;</span></div>
<div class="t" style="left:372.50px;top:448.54px;font-size:10px;color:#000;transform:scaleX(1.1269);">1/308</div>
<div class="t" style="left:422.40px;top:448.54px;font-size:10px;color:#000;transform:scaleX(1.0950);">Ln. 2 Col. 1</div>
<div class="t" style="left:500.60px;top:448.54px;font-size:10px;color:#000;transform:scaleX(1.0915);">Lines: 22</div>
<div class="t" style="left:563.30px;top:448.54px;font-size:10px;color:#000;transform:scaleX(1.0277);">INSERT</div>
<div class="t" style="left:614.40px;top:448.54px;font-size:10px;color:#000;transform:scaleX(1.0064);">WRITABLE</div>
<div class="t" style="left:671.70px;top:448.54px;font-size:10px;color:#000;transform:scaleX(1.1631);">\n</div>
<div class="t" style="left:688.80px;top:448.54px;font-size:10px;color:#000;transform:scaleX(1.0400);">UTF8</div>
<div class="t" style="left:730.90px;top:448.54px;font-size:10px;color:#000;transform:scaleX(1.1029);">Delimiter: ;</div>
<svg style="left:228px;top:639px" width="11" height="11" viewBox="0 0 11 11"><defs><linearGradient id="cb" x1="0" y1="0" x2="0" y2="1"><stop offset="0" stop-color="#9a9a9a"/><stop offset="1" stop-color="#c8c8c8"/></linearGradient></defs><rect x="0.5" y="0.5" width="10" height="10" rx="1" fill="#c4c4c4" stroke="#e8e8e8" stroke-width="1"/><rect x="2" y="2" width="7" height="7" fill="url(#cb)" stroke="#8a8a8a" stroke-width="0.6"/></svg>
<div class="t" style="left:265.90px;top:640.34px;font-size:10px;color:#000;transform:scaleX(1.0804);">19:59:21:552 Generating SQL . . . Done.</div>
<div style="position:absolute;left:203px;top:84px;width:118px;height:22.5px;box-sizing:border-box;border:1px solid #8c8c8c;border-radius:3px;background:linear-gradient(180deg,#fdfdfd,#e8e8e8 60%,#d6d6d6)"></div>
<div class="t" style="left:206.20px;top:91.04px;font-size:10px;color:#000;transform:scaleX(1.1027);">&lt;Quick Connect&gt;</div>
<svg style="left:0;top:0" width="952" height="110"><path d="M308.8 93.2H317.3L313.05 97.6Z" fill="#000"/></svg>
<div style="position:absolute;left:774px;top:84px;width:54px;height:22.5px;box-sizing:border-box;border:1px solid #8c8c8c;border-radius:3px;background:linear-gradient(180deg,#fdfdfd,#e8e8e8 60%,#d6d6d6)"></div>
<div class="t" style="left:777.20px;top:91.04px;font-size:10px;color:#000;transform:scaleX(1.0720);">On</div>
<svg style="left:0;top:0" width="952" height="110"><path d="M815.8 93.2H824.3L820.05 97.6Z" fill="#000"/></svg>
<div style="position:absolute;left:864px;top:84px;width:81px;height:22.5px;box-sizing:border-box;border:1px solid #8c8c8c;border-radius:3px;background:linear-gradient(180deg,#fdfdfd,#e8e8e8 60%,#d6d6d6)"></div>
<div class="t" style="left:867.00px;top:91.04px;font-size:10px;color:#000;transform:scaleX(1.0708);">SQL PL</div>
<svg style="left:0;top:0" width="952" height="110"><path d="M932.8 93.2H941.3L937.05 97.6Z" fill="#000"/></svg>
<svg style="left:0;top:0" width="952" height="110" viewBox="0 0 952 110"><defs><linearGradient id="gGreen" x1="0" y1="0" x2="0" y2="1"><stop offset="0" stop-color="#8ee08e"/><stop offset="0.5" stop-color="#3cb04a"/><stop offset="1" stop-color="#2a9a38"/></linearGradient><linearGradient id="gCyl" x1="0" y1="0" x2="1" y2="0"><stop offset="0" stop-color="#9a9a9a"/><stop offset="0.4" stop-color="#f4f4f4"/><stop offset="1" stop-color="#8c8c8c"/></linearGradient><linearGradient id="gCyl2" x1="0" y1="0" x2="1" y2="0"><stop offset="0" stop-color="#8a8a62"/><stop offset="0.35" stop-color="#fffff0"/><stop offset="1" stop-color="#7e7e56"/></linearGradient><linearGradient id="gSave" x1="0" y1="0" x2="0" y2="1"><stop offset="0" stop-color="#eef3fb"/><stop offset="1" stop-color="#b4c6e2"/></linearGradient><linearGradient id="gOF" x1="0" y1="0" x2="0" y2="1"><stop offset="0" stop-color="#fde8b0"/><stop offset="1" stop-color="#f0bc58"/></linearGradient><linearGradient id="gBook" x1="0" y1="0" x2="0" y2="1"><stop offset="0" stop-color="#8cbcf0"/><stop offset="1" stop-color="#4a88d0"/></linearGradient></defs><path d="M12.5 88.5H19.8L22.5 91.2V101.5H12.5Z" fill="#fbfbf6" stroke="#707070" stroke-width="1"/><path d="M19.8 88.5V91.2H22.5" fill="#c8d8f0" stroke="#707070" stroke-width="0.8"/><path d="M33.5 100.5V91.6L34.6 90.3H39L39.8 91.8H45V95.5" fill="url(#gOF)" stroke="#c07a20" stroke-width="1"/><path d="M33.6 100.6L37.4 95.6H48.2L44.4 100.6Z" fill="url(#gOF)" stroke="#c07a20" stroke-width="1"/><rect x="56.5" y="88.5" width="14" height="14" rx="1" fill="url(#gSave)" stroke="#5a7ab4" stroke-width="1"/><rect x="59" y="89" width="8.5" height="5.5" fill="#fafafa" stroke="#8aa0c8" stroke-width="0.6"/><rect x="59" y="93.6" width="8.5" height="1" fill="#e8c890"/><rect x="60" y="97.2" width="6.5" height="5" fill="#6c88bc"/><rect x="61" y="98.4" width="4.5" height="3.2" fill="#f6e0b0"/><path d="M98.5 90.0V100.5Q98.5 102.0 102.5 102.0Q106.5 102.0 106.5 100.5V90.0Q106.5 88.5 102.5 88.5Q98.5 88.5 98.5 90.0Z" fill="url(#gCyl)" stroke="#9a9012" stroke-width="1.1"/><path d="M98.5 90.3Q102.5 92.1 106.5 90.3" fill="none" stroke="#9a9012" stroke-width="0.8"/><path d="M91 93.2H95.4V90.2L100.8 95.6L95.4 101V98H91Z" fill="#10c020" stroke="#0a6a10" stroke-width="0.9"/><path d="M115.5 94.5V101.0Q115.5 102.5 118.75 102.5Q122.0 102.5 122.0 101.0V94.5Q122.0 93 118.75 93Q115.5 93 115.5 94.5Z" fill="url(#gCyl)" stroke="#9a9012" stroke-width="1.1"/><path d="M115.5 94.8Q118.75 96.6 122.0 94.8" fill="none" stroke="#9a9012" stroke-width="0.8"/><path d="M121 91.5L125 88.2V90H129V93.3H125V95Z" fill="#ff0000" stroke="#101040" stroke-width="0.9"/><rect x="138.5" y="88.5" width="10" height="10" rx="1.5" fill="#f8b8b8" stroke="#e06060" stroke-width="1"/><rect x="142.3" y="92.3" width="10.2" height="10.2" rx="1.5" fill="#e83040" stroke="#c81828" stroke-width="1"/><rect x="143.6" y="93.6" width="7.6" height="7.6" fill="none" stroke="#f89090" stroke-width="0.7"/><path d="M161.5 94.5V101.0Q161.5 102.5 164.75 102.5Q168.0 102.5 168.0 101.0V94.5Q168.0 93 164.75 93Q161.5 93 161.5 94.5Z" fill="url(#gCyl)" stroke="#9a9012" stroke-width="1.1"/><path d="M161.5 94.8Q164.75 96.6 168.0 94.8" fill="none" stroke="#9a9012" stroke-width="0.8"/><path d="M171.5 87.60000000000001Q172.2 90.7 175.3 91.4Q172.2 92.10000000000001 171.5 95.2Q170.8 92.10000000000001 167.7 91.4Q170.8 90.7 171.5 87.60000000000001Z" fill="#e8b838" stroke="#b88818" stroke-width="0.8"/><path d="M169.2 91.4H173.8M171.5 89.10000000000001V93.7" stroke="#fff8d8" stroke-width="1"/><path d="M187.5 90.0V100.5Q187.5 102.0 191.75 102.0Q196.0 102.0 196.0 100.5V90.0Q196.0 88.5 191.75 88.5Q187.5 88.5 187.5 90.0Z" fill="url(#gCyl2)" stroke="#6e6e48" stroke-width="1.1"/><path d="M187.5 90.3Q191.75 92.1 196.0 90.3" fill="none" stroke="#6e6e48" stroke-width="0.8"/><ellipse cx="191.75" cy="90.3" rx="3" ry="1" fill="#ffffff"/><path d="M343 93.6L346.2 92L349.6 95.6L346.2 99.4L343.6 101.2L341.6 99.4L344.6 97Z" fill="#f2e860" stroke="#2a3a8a" stroke-width="0.8"/><path d="M339.8 92.8L345.6 87.2L348.2 89.2V91.2L343.4 95.6L340.2 94.6Z" fill="#e8ecc0" stroke="#8a7a30" stroke-width="0.9"/><path d="M341.2 94.4L347 89.4" stroke="#8a7a30" stroke-width="0.9"/><path d="M342.8 98.8L344.6 100.4L342.8 102L341 100.4Z" fill="#f8f020" stroke="#203070" stroke-width="0.8"/><rect x="362.5" y="88.5" width="12" height="6.5" fill="#eaf8fc" stroke="#b8a878" stroke-width="1"/><rect x="362.5" y="95.5" width="12" height="7" fill="#eaf8fc" stroke="#8898b8" stroke-width="1"/><rect x="364.2" y="90.3" width="3" height="3" fill="#2a9a48"/><rect x="368.2" y="91.4" width="4.6" height="1" fill="#2a9a48"/><rect x="364.2" y="97.6" width="3" height="3" fill="#6878b0"/><rect x="368.2" y="98.7" width="4.6" height="1" fill="#6878b0"/><rect x="383.3" y="87.5" width="10.5" height="13" fill="#f4f8fc" stroke="#b08c3c" stroke-width="1"/><path d="M385 89.5H390M385 91.5H390M385 93.5H389M385 95.5H389" stroke="#6a88c0" stroke-width="1"/><path d="M391 89H395.2V93.5H397.6L393.1 98L388.6 93.5H391Z" fill="#a8d8a8" stroke="#1a58a8" stroke-width="1"/><rect x="389.5" y="98.5" width="8.3" height="4" fill="#1a58a8"/><path d="M391.2 100.5h1M393.2 100.5h1M395.2 100.5h1" stroke="#fff" stroke-width="1"/><path d="M411.5 89.5H419L422 92.5V102.5H411.5Z" fill="#f8f8fc" stroke="#b08c3c" stroke-width="1"/><path d="M416 94.5H420M416 96.5H420M416 98.5H420M416 100.5H420" stroke="#8aa0c8" stroke-width="1"/><rect x="407" y="87.2" width="8.8" height="4.5" fill="#1a58a8"/><path d="M408.6 89.5h1M410.6 89.5h1M412.6 89.5h1" stroke="#fff" stroke-width="1"/><path d="M408.5 92.5V96.5Q408.5 98 411 98H413V96L418 98.8L413 101.6V100H410Q406.8 100 406.8 96.5V92.5Z" fill="#a8d8a8" stroke="#1a58a8" stroke-width="0.9"/><path d="M440.8 89.6H442.8V101.4H433.6L432.6 100.6" fill="#fbfdff" stroke="#4a5262" stroke-width="0.8"/><path d="M432.6 89.2Q435 88.9 436.6 88.4Q438.8 87.6 440.8 87.1V99Q438.6 99.6 436.6 100.1Q434.8 100.5 432.6 100.8Z" fill="url(#gBook)" stroke="#a88c50" stroke-width="0.8"/><path d="M434.4 95.4L436.4 92.6H439.4L437.4 95.4Z" fill="#fffcf4" stroke="#b09860" stroke-width="0.7"/><path d="M452.6 94.6L459.6 101.6L468 96.4V95.2L460 100.2L452.6 93.4Z" fill="#f4f8fc" stroke="#3a4252" stroke-width="0.7"/><path d="M452.6 93L460.6 88.2L467.8 95.2L459.8 100.3Z" fill="url(#gBook)" stroke="#a88c50" stroke-width="0.8"/><path d="M452.6 93L452.6 94.8L459.6 101.6L459.8 100.3Z" fill="#5a90d8" stroke="#a88c50" stroke-width="0.5"/><path d="M457.6 95L459.6 92.4H462.8L460.8 95Z" fill="#fffcf4" stroke="#b09860" stroke-width="0.7"/><rect x="479.6" y="88.4" width="8" height="3.4" rx="1.7" fill="#e4dcc0" stroke="#5a7ac8" stroke-width="0.9"/><rect x="479.6" y="93.2" width="8" height="3.4" rx="1.7" fill="#fae8e0" stroke="#b05a50" stroke-width="0.9"/><rect x="479.6" y="98" width="8" height="3.4" rx="1.7" fill="#dce6fa" stroke="#4a5ad8" stroke-width="0.9"/><rect x="499" y="88.6" width="12" height="1.6" fill="#1a5aa8"/><rect x="499" y="92.6" width="12" height="1.6" fill="#1a5aa8"/><rect x="499" y="96.8" width="4.5" height="1.6" fill="#1a5aa8"/><path d="M505.2 96.5L507.5 94.8L509.2 96.8L511 96L514 99.6L510.6 102.6L510 100.4L507.8 101.2Z" fill="#f0d060" stroke="#b08020" stroke-width="0.9"/><rect x="523" y="88.6" width="12" height="1.6" fill="#1a5aa8"/><rect x="523" y="92.6" width="12" height="1.6" fill="#1a5aa8"/><rect x="528.5" y="96.8" width="6.5" height="1.6" fill="#1a5aa8"/><path d="M524.5 95.7Q525.2 98.6 528.1 99.3Q525.2 100.0 524.5 102.89999999999999Q523.8 100.0 520.9 99.3Q523.8 98.6 524.5 95.7Z" fill="#e8b838" stroke="#b88818" stroke-width="0.8"/><path d="M522.4 99.3H526.6M524.5 97.2V101.39999999999999" stroke="#fff8d8" stroke-width="1"/><rect x="546" y="88.6" width="12" height="1.6" fill="#1a5aa8"/><rect x="546" y="92.6" width="12" height="1.6" fill="#1a5aa8"/><rect x="551" y="96.8" width="7" height="1.6" fill="#1a5aa8"/><path d="M545 102.4L553.2 94L554.8 95.6L546.6 104Z" fill="#e8d098" stroke="#a07a3a" stroke-width="0.8"/><path d="M544.4 103.2L545.6 102" stroke="#1a3a78" stroke-width="1.6"/><rect x="570" y="88.6" width="12" height="1.6" fill="#1a5aa8"/><rect x="570" y="92.6" width="12" height="1.6" fill="#1a5aa8"/><rect x="575" y="96.8" width="7" height="1.6" fill="#1a5aa8"/><path d="M568.3 94.8L575 98.4L568.3 102Z" fill="#3aa84a" stroke="#1a7a2a" stroke-width="0.8"/><rect x="593.3" y="89" width="12.4" height="11.4" fill="#fafafa" stroke="#c0a060" stroke-width="0.9"/><rect x="593.3" y="89" width="12.4" height="2.2" fill="#f08020"/><path d="M593.3 94.2H605.7M593.3 97.3H605.7M599.5 91V100.4M602.6 91V100.4" stroke="#c8c8b8" stroke-width="0.7"/><path d="M591.3 93.2H595.6V90.8L601.2 95.4L595.6 100V97.6H591.3Z" fill="#fff0a8" stroke="#d08a18" stroke-width="1"/><path d="M627.3 92.6H634V89.4L640.8 95.1L634 100.8V97.6H627.3Z" fill="url(#gGreen)" stroke="#1f6a24" stroke-width="0.9"/><path d="M661 90.3H654.5V87.4L649.2 91.3L654.5 95.2V92.4H661Z" fill="url(#gGreen)" stroke="#1f6a24" stroke-width="0.9"/><path d="M652.3 97.3H659V94.4L664.6 98.6L659 102.8V99.8H652.3Z" fill="url(#gGreen)" stroke="#1f6a24" stroke-width="0.9"/><path d="M676.6 88.3H683.2V95.3H686L679.9 101.8L673.8 95.3H676.6Z" fill="url(#gGreen)" stroke="#1f6a24" stroke-width="0.9"/><path d="M699.5 101.7H706.1V94.6H708.9L702.8 88.2L696.7 94.6H699.5Z" fill="url(#gGreen)" stroke="#1f6a24" stroke-width="0.9"/><path d="M733.5 88V101.2H743.6V98" fill="#fdfdfd" stroke="#909090" stroke-width="1"/><rect x="733.5" y="88" width="10" height="13.2" fill="#fdfdfd"/><path d="M733.5 88.5V101.2H743.6V98M743.6 91V88.5" fill="none" stroke="#909090" stroke-width="1"/><path d="M734 87.6h1M736 87.6h1M738 87.6h1M740 87.6h1M742 87.6h1" stroke="#909090" stroke-width="1"/><path d="M735.6 94.6L738.8 97.8L745.8 90.8" fill="none" stroke="#858585" stroke-width="3"/><path d="M768.5 92.4H761.4V89.2L755.2 95L761.4 100.8V97.6H768.5Z" fill="#a8a8a8" stroke="#888888" stroke-width="0.9"/><rect x="832.5" y="88.5" width="14" height="14" fill="#eef8fc" stroke="#7a6438" stroke-width="1"/><rect x="832.5" y="88" width="14" height="2.8" fill="#2a64b8"/><path d="M835 93.5H844M835 95.5H844M835 97.5H840" stroke="#7a8ac0" stroke-width="1"/></svg>
<svg style="left:0;top:0" width="952" height="660"><g transform="translate(-92.5 549.5)"><path d="M343 93.6L346.2 92L349.6 95.6L346.2 99.4L343.6 101.2L341.6 99.4L344.6 97Z" fill="#f2e860" stroke="#2a3a8a" stroke-width="0.8"/><path d="M339.8 92.8L345.6 87.2L348.2 89.2V91.2L343.4 95.6L340.2 94.6Z" fill="#e8ecc0" stroke="#8a7a30" stroke-width="0.9"/><path d="M341.2 94.4L347 89.4" stroke="#8a7a30" stroke-width="0.9"/><path d="M342.8 98.8L344.6 100.4L342.8 102L341 100.4Z" fill="#f8f020" stroke="#203070" stroke-width="0.8"/></g></svg>
</body></html>
